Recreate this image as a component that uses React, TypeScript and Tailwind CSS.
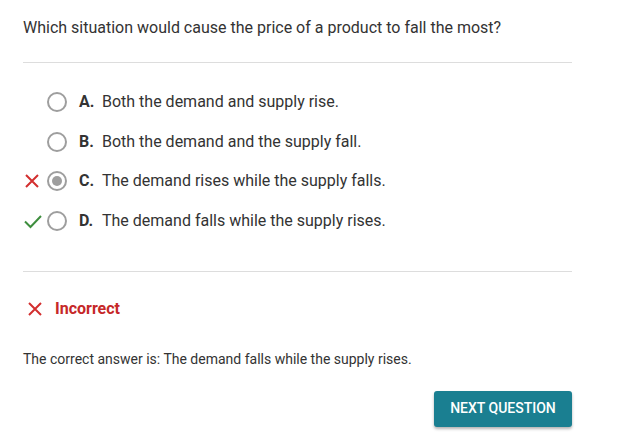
import React from 'react';

const options = [
  { letter: 'A.', text: 'Both the demand and supply rise.', mark: null, selected: false },
  { letter: 'B.', text: 'Both the demand and the supply fall.', mark: null, selected: false },
  { letter: 'C.', text: 'The demand rises while the supply falls.', mark: 'wrong', selected: true },
  { letter: 'D.', text: 'The demand falls while the supply rises.', mark: 'right', selected: false },
];

const Cross = ({ size = 18 }: { size?: number }) => (
  <svg width={size} height={size} viewBox="0 0 18 18" fill="none">
    <path d="M3 3 L15 15 M15 3 L3 15" stroke="#d32f2f" strokeWidth="2" strokeLinecap="butt" />
  </svg>
);

const Check = () => (
  <svg width="20" height="18" viewBox="0 0 20 18" fill="none">
    <path d="M2 9.5 L7.5 15 L18 4" stroke="#3e8e3e" strokeWidth="2" />
  </svg>
);

export default function App() {
  return (
    <div className="w-[629px] h-[442px] bg-white text-[#333] font-['Roboto',sans-serif] relative overflow-hidden">
      <div className="w-[549px] ml-[23px]">
        <p className="pt-[18px] text-[16px] leading-[20px] text-[#333]">
          Which situation would cause the price of a product to fall the most?
        </p>
        <div className="mt-[24px] border-t border-[#ddd]" />

        <div className="pt-[29px] pb-[40px] flex flex-col gap-[19.5px]">
          {options.map((o) => (
            <div key={o.letter} className="flex items-center h-[20px]">
              <div className="w-[22px] flex justify-start items-center">
                {o.mark === 'wrong' && <Cross size={18} />}
                {o.mark === 'right' && <Check />}
              </div>
              <div className="w-[20px] h-[20px] ml-[2px] rounded-full border-2 border-[#9e9e9e] flex items-center justify-center">
                {o.selected && <div className="w-[10px] h-[10px] rounded-full bg-[#9e9e9e]" />}
              </div>
              <span className="ml-[12px] font-bold text-[16px] text-[#333] w-[23px]">{o.letter}</span>
              <span className="text-[16px] text-[#333]">{o.text}</span>
            </div>
          ))}
        </div>

        <div className="border-t border-[#ddd]" />

        <div className="mt-[27px] flex items-center h-[20px]">
          <div className="ml-[3px] flex"><Cross size={18} /></div>
          <span className="ml-[11px] font-bold text-[16px] text-[#c62828]">Incorrect</span>
        </div>

        <p className="mt-[30px] text-[14px] leading-[20px] text-[#333]">
          The correct answer is: The demand falls while the supply rises.
        </p>

        <div className="mt-[22px] flex justify-end">
          <button className="w-[138px] h-[36px] rounded-[3px] bg-[#1a7f91] text-white text-[14px] font-medium shadow-[0_2px_3px_rgba(0,0,0,0.3)]">
            NEXT QUESTION
          </button>
        </div>
      </div>
    </div>
  );
}
